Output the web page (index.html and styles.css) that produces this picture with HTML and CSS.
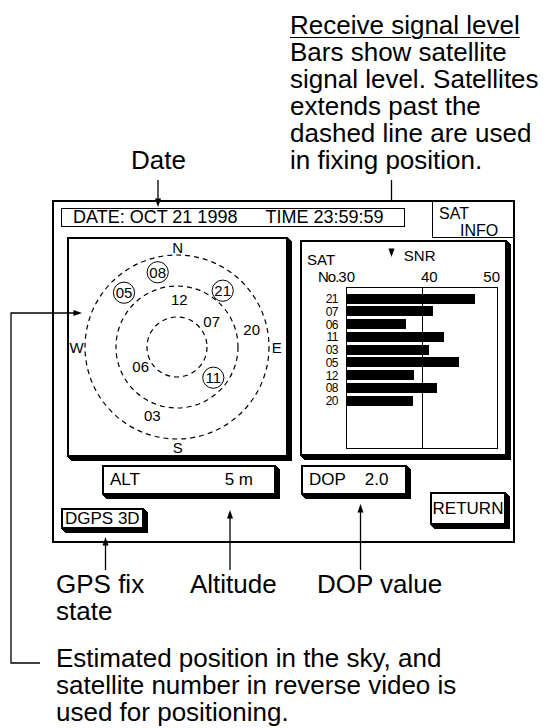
FILE: index.html
```html
<!DOCTYPE html>
<html lang="en">
<head>
<meta charset="utf-8">
<title>SAT INFO</title>
<link rel="stylesheet" href="styles.css">
</head>
<body>
<div class="page">
  <div class="screen">
    <div class="hdr">
      <div class="datebox"><span>DATE: OCT 21 1998</span><span class="time">TIME 23:59:59</span></div>
      <div class="satinfo"><div class="si-1">SAT</div><div class="si-2">INFO</div></div>
    </div>
    <div class="panels">
      <div class="sky">
        <svg class="sky-svg" width="217" height="216" viewBox="0 0 217 216">
          <g fill="none" stroke="#000" stroke-width="1.2" stroke-dasharray="5 4">
            <circle cx="108" cy="108" r="92"/>
            <circle cx="108" cy="108" r="61"/>
            <circle cx="108" cy="108" r="30"/>
          </g>
          <g fill="none" stroke="#000" stroke-width="1">
            <circle cx="88.7" cy="33.3" r="10.6"/>
            <circle cx="55" cy="53.7" r="10.6"/>
            <circle cx="153.7" cy="51.7" r="10.6"/>
            <circle cx="144.3" cy="138.7" r="10.6"/>
          </g>
          <g class="sky-txt" text-anchor="middle">
            <text x="108.7" y="14.3">N</text>
            <text x="108.7" y="214.3">S</text>
            <text x="7.7" y="114.3">W</text>
            <text x="207.7" y="114.3">E</text>
            <text x="88.7" y="38.6">08</text>
            <text x="55" y="59">05</text>
            <text x="153.7" y="57">21</text>
            <text x="110.3" y="65.6">12</text>
            <text x="142.7" y="88">07</text>
            <text x="182.7" y="96.3">20</text>
            <text x="71.7" y="132.6">06</text>
            <text x="144.3" y="144">11</text>
            <text x="83.3" y="182">03</text>
          </g>
        </svg>
      </div>
      <div class="snr">
        <div class="snr-r1"><span class="sat-l">SAT</span><span class="snr-l">SNR</span></div>
        <div class="snr-r2"><span class="no-l">No.</span><span class="t30">30</span><span class="t40">40</span><span class="t50">50</span></div>
        <div class="chart-wrap">
          <div class="ylabels">
            <div>21</div><div>07</div><div>06</div><div>11</div><div>03</div><div>05</div><div>12</div><div>08</div><div>20</div>
          </div>
          <div class="chart">
            <div class="bar" style="width:128px"></div>
            <div class="bar" style="width:86px"></div>
            <div class="bar" style="width:59px"></div>
            <div class="bar" style="width:97px"></div>
            <div class="bar" style="width:82px"></div>
            <div class="bar" style="width:112px"></div>
            <div class="bar" style="width:67px"></div>
            <div class="bar" style="width:90px"></div>
            <div class="bar" style="width:66px"></div>
          </div>
        </div>
      </div>
    </div>
    <div class="bottom">
      <div class="bl">
        <div class="row-ad">
          <div class="box alt"><span>ALT</span><span class="alt-v">5 m</span></div>
          <div class="box dop"><span>DOP</span><span class="dop-v">2.0</span></div>
        </div>
        <div class="box dgps">DGPS 3D</div>
      </div>
      <div class="box ret">RETURN</div>
    </div>
  </div>

  <p class="note note-snr"><span class="ul">Receive signal level</span><br>Bars show satellite<br>signal level. Satellites<br>extends past the<br>dashed line are used<br>in fixing position.</p>
  <p class="note note-date">Date</p>
  <p class="note note-gps">GPS fix<br>state</p>
  <p class="note note-alt">Altitude</p>
  <p class="note note-dop">DOP value</p>
  <p class="note note-est">Estimated position in the sky, and<br>satellite number in reverse video is<br>used for positioning.</p>

  <svg class="leaders" width="548" height="728" viewBox="0 0 548 728">
    <g fill="none" stroke="#000" stroke-width="1.3">
      <path d="M158 180V200"/>
      <path d="M391.5 180V200"/>
      <path d="M11 313H75"/>
      <path d="M11 312.4V663H40"/>
      <path d="M105.5 544V570"/>
      <path d="M230 517V570"/>
      <path d="M360.5 511V570"/>
    </g>
    <g fill="#000">
      <path d="M158 207L155 198.5H161Z"/>
      <path d="M391.5 257L388.5 248.5H394.5Z"/>
      <path d="M82 313L73.5 310V316Z"/>
      <path d="M105.5 537L102.5 545.5H108.5Z"/>
      <path d="M230 510L227 518.5H233Z"/>
      <path d="M360.5 504L357.5 512.5H363.5Z"/>
    </g>
  </svg>
</div>
</body>
</html>
```

FILE: styles.css
```css
* {
  box-sizing: border-box;
}

body {
  margin: 0;
  background: #fff;
  color: #000;
  font-family: "Liberation Sans", Arial, sans-serif;
}

.page {
  position: relative;
  width: 548px;
  height: 728px;
  padding: 200px 0 0 52px;
  overflow: hidden;
}

/* ---------- device screen ---------- */
.screen {
  width: 463px;
  height: 343px;
  border: 2px solid #000;
  background: #fff;
}

.hdr {
  display: flex;
  height: 36px;
}

.datebox {
  display: flex;
  margin: 6px 0 0 7px;
  width: 344px;
  height: 19px;
  border: 1px solid #000;
  padding-left: 11px;
  font-size: 18px;
  line-height: 17px;
  white-space: nowrap;
}

.time {
  margin-left: 28px;
}

.satinfo {
  margin-left: auto;
  width: 81px;
  height: 36px;
  border-left: 1px solid #000;
  border-bottom: 1px solid #000;
  padding-top: 3px;
  font-size: 16px;
  line-height: 17px;
}

.si-1 {
  padding-left: 6px;
}

.si-2 {
  padding-left: 27px;
}

.panels {
  display: flex;
  align-items: flex-start;
}

.sky,
.snr,
.box {
  border: 2px solid #000;
  background: #fff;
  box-shadow: 1px 1px 0 #000, 2px 2px 0 #000, 3px 3px 0 #000, 4px 4px 0 #000;
}

.sky {
  margin: -1px 0 0 13px;
  width: 221px;
  height: 220px;
}

.sky-svg {
  display: block;
}

.sky-txt {
  font-family: "Liberation Sans", Arial, sans-serif;
  font-size: 15px;
}

.snr {
  margin: 2px 0 0 12px;
  width: 207px;
  height: 216px;
  font-size: 15px;
  line-height: 15px;
}

.snr-r1 {
  display: flex;
  align-items: flex-start;
  height: 26.5px;
}

.sat-l {
  margin: 9.8px 0 0 5px;
}

.snr-l {
  margin: 5.5px 0 0 68.8px;
}

.snr-r2 {
  display: flex;
  height: 15px;
}

.no-l {
  margin-left: 16px;
  letter-spacing: -1px;
}

.t40 {
  margin-left: 66px;
}

.t50 {
  margin-left: 45.6px;
}

.chart-wrap {
  display: flex;
  margin-top: 3.5px;
}

.ylabels {
  width: 36px;
  padding-top: 6.2px;
  text-align: right;
  font-size: 12px;
  line-height: 12.75px;
  letter-spacing: -0.5px;
}

.ylabels div {
  height: 12.75px;
}

.chart {
  margin-left: 8px;
  width: 152px;
  height: 162px;
  border: 1px solid #000;
  padding-top: 5.7px;
  background: linear-gradient(#000, #000) 75px 0 / 1px 100% no-repeat;
}

.bar {
  height: 10px;
  margin-bottom: 2.75px;
  background: #000;
}

.bottom {
  display: flex;
  align-items: flex-start;
}

.bl {
  display: flex;
  flex-direction: column;
  align-items: flex-start;
}

.row-ad {
  display: flex;
  margin-top: 8px;
}

.box {
  font-size: 17px;
  white-space: nowrap;
}

.alt,
.dop {
  display: flex;
  align-items: center;
  height: 30px;
  padding-left: 6px;
}

.alt {
  margin-left: 48px;
  width: 174px;
}

.alt-v {
  margin-left: auto;
  margin-right: 21px;
}

.dop {
  margin-left: 25px;
  width: 106px;
}

.dop-v {
  margin-left: 19px;
}

.dgps {
  margin: 13px 0 0 7px;
  width: 83px;
  height: 21px;
  padding-left: 2px;
  line-height: 17px;
}

.ret {
  margin: 35px 7px 0 auto;
  width: 76px;
  height: 33px;
  display: flex;
  align-items: center;
  justify-content: center;
}

/* ---------- callout labels ---------- */
.note {
  position: absolute;
  margin: 0;
  font-size: 26px;
  line-height: 27px;
  white-space: nowrap;
}

.ul {
  text-decoration: underline;
  text-decoration-thickness: 1px;
  text-underline-offset: 3px;
}

.note-snr {
  left: 290px;
  top: 12px;
}

.note-date {
  left: 131px;
  top: 147px;
}

.note-gps {
  left: 56px;
  top: 571px;
}

.note-alt {
  left: 190px;
  top: 571px;
}

.note-dop {
  left: 317px;
  top: 571px;
}

.note-est {
  left: 56px;
  top: 645px;
}

.leaders {
  position: absolute;
  left: 0;
  top: 0;
  pointer-events: none;
}
```
